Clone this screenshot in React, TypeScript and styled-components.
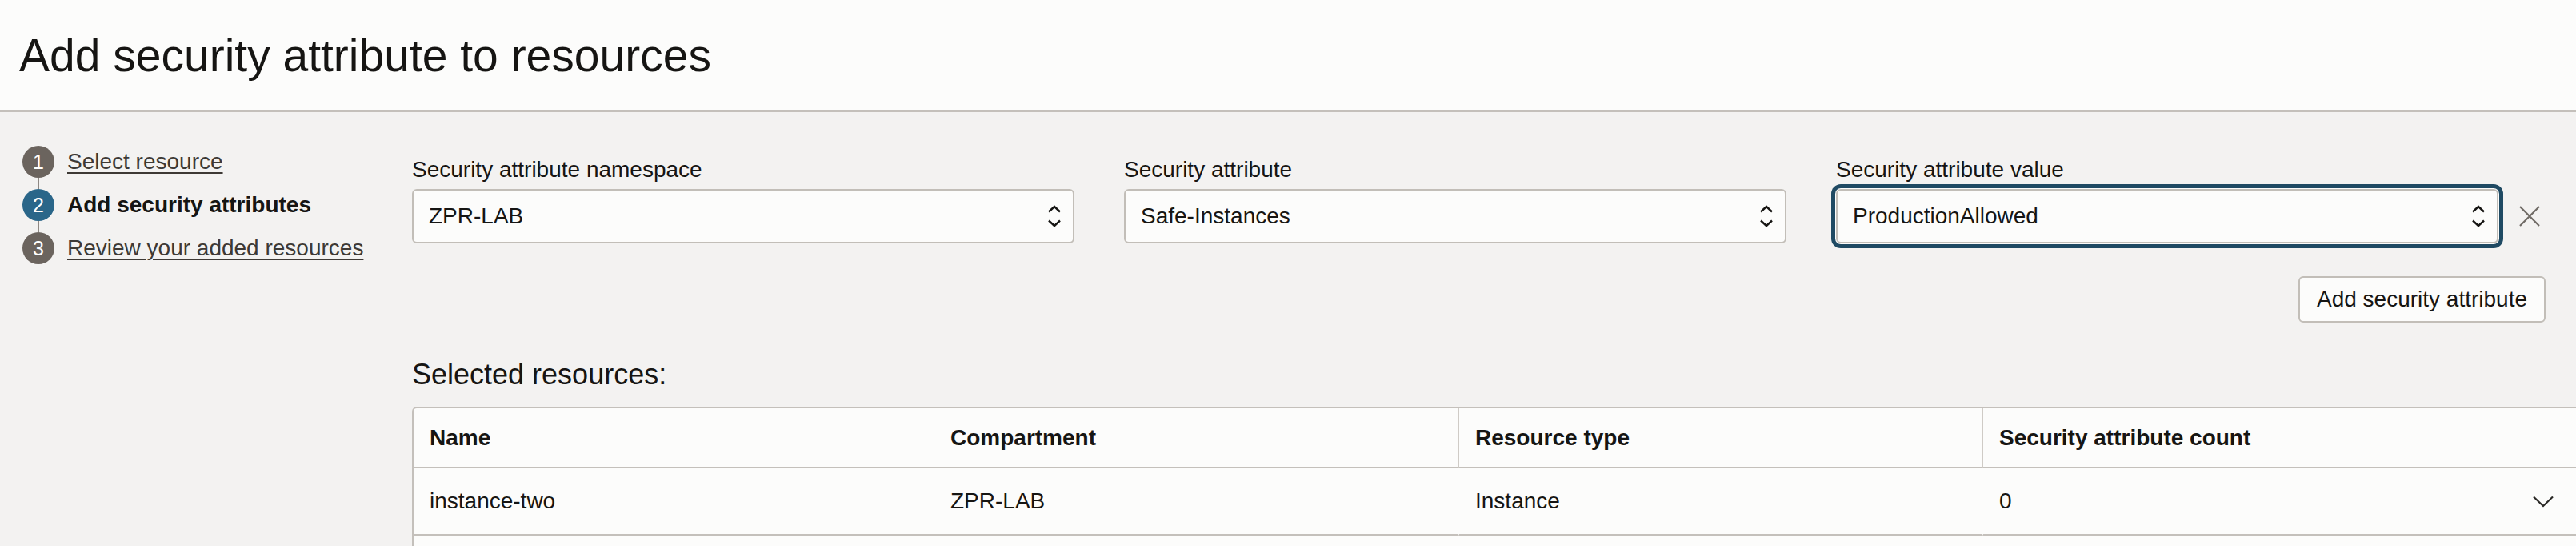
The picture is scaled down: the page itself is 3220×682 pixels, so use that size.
import React from "react";
import styled, { createGlobalStyle, css } from "styled-components";

const GlobalStyle = createGlobalStyle`
  html, body {
    margin: 0;
    padding: 0;
    overflow: hidden;
    background: #f3f2f1;
  }
  body {
    font-family: "Liberation Sans", Arial, Helvetica, sans-serif;
    color: #161513;
  }
  * { box-sizing: border-box; }
`;

const Page = styled.div`
  width: 3220px;
  min-height: 682px;
  background: #f3f2f1;
`;

const Header = styled.header`
  height: 140px;
  background: #fcfcfb;
  border-bottom: 2px solid #c4c0bb;
  padding: 41px 24px 0;
`;

const Title = styled.h1`
  margin: 0;
  font-size: 57px;
  line-height: 56px;
  font-weight: 400;
  color: #161513;
`;

const Body = styled.div`
  display: flex;
  align-items: flex-start;
`;

const Stepper = styled.ol`
  list-style: none;
  margin: 0;
  padding: 35px 0 0 28px;
  width: 515px;
  flex: 0 0 515px;
`;

const Step = styled.li`
  display: flex;
  align-items: center;
  gap: 16px;
  height: 54px;
`;

const Marker = styled.span<{ $active?: boolean; $last?: boolean }>`
  position: relative;
  flex: 0 0 40px;
  width: 40px;
  height: 40px;
  border-radius: 50%;
  background: ${(p) => (p.$active ? "#2a6689" : "#6b645e")};
  color: #ffffff;
  font-size: 25px;
  line-height: 40px;
  text-align: center;
  ${(p) =>
    !p.$last &&
    css`
      &::after {
        content: "";
        position: absolute;
        left: 19px;
        top: 40px;
        width: 2px;
        height: 14px;
        background: #8e8883;
      }
    `}
`;

const StepLink = styled.a`
  font-size: 28px;
  color: #3d3935;
  text-decoration: underline;
  text-underline-offset: 4px;
  text-decoration-thickness: 2px;
  cursor: pointer;
`;

const StepCurrent = styled.span`
  font-size: 28px;
  font-weight: 700;
  color: #161513;
`;

const Main = styled.main`
  flex: 1;
  min-width: 0;
  padding: 55px 38px 0 0;
`;

const FieldRow = styled.div`
  display: flex;
  gap: 62px;
  align-items: flex-end;
`;

const Field = styled.div`
  display: flex;
  flex-direction: column;
`;

const Label = styled.label`
  font-size: 28px;
  line-height: 34px;
  margin-bottom: 7px;
  color: #161513;
`;

const SelectLine = styled.div`
  display: flex;
  align-items: center;
  gap: 26px;
`;

const Select = styled.div<{ $focused?: boolean }>`
  width: 828px;
  height: 68px;
  display: flex;
  align-items: center;
  justify-content: space-between;
  padding: 0 14px 0 19px;
  background: #fcfcfb;
  border: 2px solid #c2beb8;
  border-radius: 6px;
  font-size: 28px;
  color: #161513;
  ${(p) =>
    p.$focused &&
    css`
      box-shadow: 0 0 0 1px #fcfcfb, 0 0 0 6px #1f4a63;
    `}
`;

const IconButton = styled.button`
  border: 0;
  padding: 0;
  background: transparent;
  display: flex;
  align-items: center;
  justify-content: center;
  width: 26px;
  height: 26px;
  cursor: pointer;
`;

const Actions = styled.div`
  display: flex;
  justify-content: flex-end;
  margin-top: 41px;
`;

const Button = styled.button`
  height: 58px;
  padding: 0 21px;
  background: #fcfcfb;
  border: 2px solid #c2beb8;
  border-radius: 6px;
  font-family: "Liberation Sans", Arial, sans-serif;
  font-size: 28px;
  color: #161513;
  cursor: pointer;
`;

const SectionTitle = styled.h2`
  margin: 43px 0 18px;
  font-size: 36px;
  line-height: 44px;
  font-weight: 400;
  color: #161513;
`;

const TableWrap = styled.div`
  margin-right: -40px;
  background: #fcfcfb;
  border: 2px solid #c4c0bb;
  border-top-left-radius: 6px;
  padding-bottom: 60px;
`;

const Table = styled.table`
  width: 100%;
  table-layout: fixed;
  border-collapse: separate;
  border-spacing: 0;
`;

const Col = styled.col<{ $w?: number }>`
  width: ${(p) => (p.$w ? `${p.$w}px` : "auto")};
`;

const Th = styled.th`
  height: 75px;
  padding: 0 20px;
  text-align: left;
  font-size: 28px;
  font-weight: 700;
  color: #161513;
  border-bottom: 2px solid #c4c0bb;
  &:not(:first-child) {
    border-left: 1px solid #cfcbc6;
  }
`;

const Td = styled.td`
  height: 84px;
  padding: 0 20px;
  font-size: 28px;
  color: #161513;
  border-bottom: 2px solid #c4c0bb;
  &:not(:first-child) {
    border-left: 1px solid transparent;
  }
  &:last-child {
    padding-right: 28px;
  }
`;

const CellSplit = styled.div`
  display: flex;
  align-items: center;
  justify-content: space-between;
`;

const UpDownIcon = () => (
  <svg width="18" height="28" viewBox="0 0 18 28" fill="none">
    <path d="M2 8.5 L9 2 L16 8.5" stroke="#161513" strokeWidth="2.4" />
    <path d="M2 19.5 L9 26 L16 19.5" stroke="#161513" strokeWidth="2.4" />
  </svg>
);

const CloseIcon = () => (
  <svg width="26" height="26" viewBox="0 0 26 26" fill="none">
    <path d="M1 1 L25 25 M25 1 L1 25" stroke="#6f6a65" strokeWidth="2.2" />
  </svg>
);

const ChevronDown = () => (
  <svg width="26" height="15" viewBox="0 0 26 15" fill="none">
    <path d="M1 1.5 L13 13 L25 1.5" stroke="#2b2926" strokeWidth="2.2" />
  </svg>
);

const fields = [
  { label: "Security attribute namespace", value: "ZPR-LAB" },
  { label: "Security attribute", value: "Safe-Instances" },
];

export default function App() {
  return (
    <Page>
      <GlobalStyle />
      <Header>
        <Title>Add security attribute to resources</Title>
      </Header>
      <Body>
        <Stepper>
          <Step>
            <Marker>1</Marker>
            <StepLink>Select resource</StepLink>
          </Step>
          <Step>
            <Marker $active>2</Marker>
            <StepCurrent>Add security attributes</StepCurrent>
          </Step>
          <Step>
            <Marker $last>3</Marker>
            <StepLink>Review your added resources</StepLink>
          </Step>
        </Stepper>
        <Main>
          <FieldRow>
            {fields.map((f) => (
              <Field key={f.label}>
                <Label>{f.label}</Label>
                <Select>
                  <span>{f.value}</span>
                  <UpDownIcon />
                </Select>
              </Field>
            ))}
            <Field>
              <Label>Security attribute value</Label>
              <SelectLine>
                <Select $focused>
                  <span>ProductionAllowed</span>
                  <UpDownIcon />
                </Select>
                <IconButton aria-label="Remove">
                  <CloseIcon />
                </IconButton>
              </SelectLine>
            </Field>
          </FieldRow>
          <Actions>
            <Button>Add security attribute</Button>
          </Actions>
          <SectionTitle>Selected resources:</SectionTitle>
          <TableWrap>
            <Table>
              <colgroup>
                <Col $w={650} />
                <Col $w={656} />
                <Col $w={655} />
                <Col />
              </colgroup>
              <thead>
                <tr>
                  <Th>Name</Th>
                  <Th>Compartment</Th>
                  <Th>Resource type</Th>
                  <Th>Security attribute count</Th>
                </tr>
              </thead>
              <tbody>
                <tr>
                  <Td>instance-two</Td>
                  <Td>ZPR-LAB</Td>
                  <Td>Instance</Td>
                  <Td>
                    <CellSplit>
                      <span>0</span>
                      <ChevronDown />
                    </CellSplit>
                  </Td>
                </tr>
              </tbody>
            </Table>
          </TableWrap>
        </Main>
      </Body>
    </Page>
  );
}
